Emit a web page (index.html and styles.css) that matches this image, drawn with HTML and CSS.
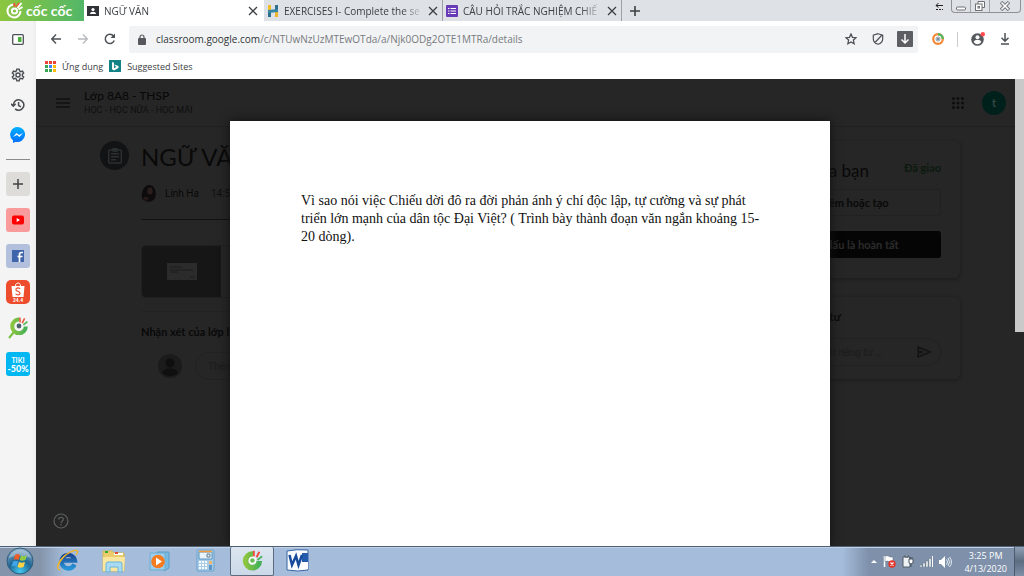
FILE: index.html
```html
<!DOCTYPE html>
<html lang="vi">
<head>
<meta charset="utf-8">
<title>NGỮ VĂN</title>
<link rel="stylesheet" href="styles.css">
</head>
<body>
<svg class="defs" aria-hidden="true">
  <defs>
    <linearGradient id="leaf" x1="0" x2="1"><stop offset="0" stop-color="#8cc540"/><stop offset="1" stop-color="#45b155"/></linearGradient>
    <linearGradient id="msg" x1="0" y1="0" x2="0" y2="1"><stop offset="0" stop-color="#00b2ff"/><stop offset="1" stop-color="#006aff"/></linearGradient>
    <radialGradient id="orb" cx=".5" cy=".9" r=".9"><stop offset="0" stop-color="#41c8ee"/><stop offset=".5" stop-color="#1f6795"/><stop offset="1" stop-color="#93b4cb"/></radialGradient>
    <linearGradient id="ie" x1="0" y1="0" x2="0" y2="1"><stop offset="0" stop-color="#1d4a94"/><stop offset="1" stop-color="#2593d6"/></linearGradient>
  </defs>
  <symbol id="close" viewBox="0 0 10 10"><path d="M1 1l8 8M9 1L1 9" stroke="#3c4043" stroke-width="1.3" fill="none"/></symbol>
  <symbol id="coccoc" viewBox="0 0 24 24">
    <path d="M13 4.500A8.500 8.500 0 1 0 21 13" fill="none" stroke="url(#leaf)" stroke-width="5"/>
    <path d="M14 8l-.5-6M16.500 9l3-6" stroke="#ef5a3c" stroke-width="2"/><path d="M18 11l5-4" stroke="#4db757" stroke-width="2"/>
    <circle cx="12.500" cy="12.500" r="3" fill="#4d6268"/>
  </symbol>
</svg>

<header class="tabbar">
  <div class="brand">
    <svg width="20" height="19" viewBox="0 0 20 19" fill="none" stroke="#fff" stroke-width="2"><path d="M8 3.500A6.500 6.500 0 1 0 15.500 10"/><circle cx="9.500" cy="10" r="2.600"/><path d="M10 6l-1-4M12 6l2-4" stroke="#f15a3b"/><path d="M13.500 8.500l4-2.500M12.500 7l4-5"/></svg>
    <span>cốc cốc</span>
  </div>
  <nav class="tabs" aria-label="Tabs">
    <div class="tab active">
      <svg width="12" height="12" viewBox="0 0 12 12"><rect y="1" width="12" height="10" fill="#303438"/><circle cx="6" cy="4.500" r="1.600" fill="#fff"/><path d="M3 9c0-3 6-3 6 0z" fill="#fff"/></svg>
      <a href="#">NGỮ VĂN</a>
      <button class="plain" aria-label="Close tab"><svg width="10" height="10"><use href="#close"/></svg></button>
    </div>
    <div class="tab">
      <svg width="12" height="12" viewBox="0 0 12 12"><path d="M1 0h3v5H1z" fill="#f2bd27"/><path d="M1 7h3v5H1z" fill="#2f6f8e"/><path d="M8 0h3v5H8z" fill="#2f6f8e"/><path d="M8 7h3v5H8z" fill="#edb62c"/><path d="M1 5l10-1v3L1 8z" fill="#3687a3"/></svg>
      <a href="#">EXERCISES I- Complete the se</a>
      <button class="plain" aria-label="Close tab"><svg width="10" height="10"><use href="#close"/></svg></button>
    </div>
    <div class="tab">
      <svg width="12" height="12" viewBox="0 0 12 12"><rect width="12" height="12" rx="1" fill="#673ab7"/><path d="M4.500 3.500H10M4.500 6H10M4.500 8.500H10M2 3.500h1.500M2 6h1.500M2 8.500h1.500" stroke="#fff"/></svg>
      <a href="#">CÂU HỎI TRẮC NGHIỆM CHIẾ</a>
      <button class="plain" aria-label="Close tab"><svg width="10" height="10"><use href="#close"/></svg></button>
    </div>
    <button class="plain newtab" aria-label="New tab"><svg width="10" height="10" viewBox="0 0 10 10"><path d="M5 0v10M0 5h10" stroke="#3c4043" stroke-width="1.600"/></svg></button>
  </nav>
  <svg class="tabsearch" width="9" height="8" viewBox="0 0 9 8"><path d="M1 2.500h7M3.500 0L1 2.500 3.500 4.500" fill="none" stroke="#222"/><path d="M1 6.500h7" stroke="#222" stroke-dasharray="2 1"/></svg>
  <div class="winctl">
    <button aria-label="Minimize"><svg width="10" height="10" viewBox="0 0 10 10"><rect x=".5" y="6" width="9" height="3" rx="1" fill="#fff" stroke="#6c7075"/></svg></button>
    <button aria-label="Restore"><svg width="10" height="10" viewBox="0 0 10 10"><path d="M3 3V.5h6.500v6H7" fill="#fff" stroke="#6c7075"/><rect x=".5" y="3" width="6.500" height="6.500" fill="#fff" stroke="#6c7075"/><rect x="3" y="5.500" width="1.500" height="1.500" fill="none" stroke="#6c7075"/></svg></button>
    <button class="wide" aria-label="Close"><svg width="10" height="10" viewBox="0 0 10 10"><path d="M1 1l8 8M9 1L1 9" stroke="#74787d" stroke-width="3.500"/><path d="M1.500 1.500l7 7M8.500 1.500l-7 7" stroke="#fff" stroke-width="1.500"/></svg></button>
  </div>
</header>

<div class="work">
  <aside class="sidebar">
    <button class="plain first" aria-label="Panel"><svg width="12" height="11" viewBox="0 0 12 11"><rect x=".7" y=".7" width="10.600" height="9.600" rx="1" fill="#fff" stroke="#4d5156" stroke-width="1.300"/><path d="M6 3h3.500v5H6z" fill="#4caf38"/></svg></button>
    <button class="plain" aria-label="Settings"><svg width="14" height="14" viewBox="0 0 24 24" fill="none" stroke="#4a4d51" stroke-width="2.400"><circle cx="12" cy="12" r="3.500"/><path d="M10 2h4l.7 3 2 1.200 3-1 2 3.600-2.300 2v2.400l2.300 2-2 3.600-3-1-2 1.200-.7 3h-4l-.7-3-2-1.200-3 1-2-3.600 2.300-2v-2.400l-2.300-2 2-3.600 3 1 2-1.200z"/></svg></button>
    <button class="plain" aria-label="History"><svg width="14" height="14" viewBox="0 0 24 24" fill="none" stroke="#4a4d51" stroke-width="2.600"><path d="M4 12a9 9 0 1 1 3 6.700M0 10l4 4 4-4M13 7v6l4 2"/></svg></button>
    <button class="plain" aria-label="Messenger"><svg width="16" height="16" viewBox="0 0 16 16"><path d="M8 0a7.700 7.500 0 1 1-2.300 14.800L3 16v-2.700A7.700 7.500 0 0 1 8 0z" fill="url(#msg)"/><path d="M3 10l3.500-4 2.500 2 4-2-3.500 4L7 8z" fill="#fff"/></svg></button>
    <hr>
    <button class="tile grey" aria-label="Add"><svg width="10" height="10" viewBox="0 0 10 10"><path d="M5 0v10M0 5h10" stroke="#404040" stroke-width="1.500"/></svg></button>
    <button class="tile pink" aria-label="YouTube"><svg width="12" height="10" viewBox="0 0 12 10"><rect y=".5" width="12" height="9" rx="2" fill="#f00"/><path d="M4.700 3v4L8 5z" fill="#fff"/></svg></button>
    <button class="tile blue" aria-label="Facebook"><svg width="12" height="12" viewBox="0 0 12 12"><rect width="12" height="12" fill="#4064ac"/><path d="M7.500 12V4.500q0-2 2-2H11M5.500 6.500h5" stroke="#fff" stroke-width="1.700" fill="none"/></svg></button>
    <button class="tile shopee" aria-label="Shopee"><svg width="14" height="15" viewBox="0 0 14 15"><path d="M.5 4h13l-1 11h-11z" fill="#fff"/><path d="M4.500 4c0-4 5-4 5 0" fill="none" stroke="#fff"/><path d="M9.200 6.700C7 5.300 4.500 6 5 8c.5 1.500 4 1.200 4 3.200 0 2-3 2-4.500.7" fill="none" stroke="#f05030" stroke-width="1.200"/></svg><span>24.4</span></button>
    <button class="tile" aria-label="Cốc Cốc"><svg width="24" height="24" viewBox="0 0 24 24"><path d="M3 22l5-6" stroke="#76bf43" stroke-width="2"/><g transform="translate(3 0) scale(.8)"><use href="#coccoc" width="24" height="24"/></g></svg></button>
    <button class="tile tiki"><span>TIKI</span><b>-50%</b></button>
  </aside>

  <main class="main">
    <div class="toolbar">
      <button class="plain" aria-label="Back"><svg width="10" height="10" viewBox="0 0 10 10" fill="none" stroke="#4d5156" stroke-width="1.400"><path d="M10 5H1M5 .5L.8 5 5 9.500"/></svg></button>
      <button class="plain" aria-label="Forward"><svg width="10" height="10" viewBox="0 0 10 10" fill="none" stroke="#b9bbbe" stroke-width="1.400"><path d="M0 5h9M5 .5L9.200 5 5 9.500"/></svg></button>
      <button class="plain" aria-label="Reload"><svg width="12" height="12" viewBox="0 0 12 12"><path d="M10.200 7.500A4.600 4.600 0 1 1 9.500 3" fill="none" stroke="#4d5156" stroke-width="1.500"/><path d="M11 .5v4.500H6.500z" fill="#4d5156"/></svg></button>
      <div class="address">
        <svg width="8" height="11" viewBox="0 0 8 11"><rect y="4" width="8" height="7" rx="1" fill="#55585c"/><path d="M2 4V3a2 2 0 0 1 4 0v1" fill="none" stroke="#55585c" stroke-width="1.200"/></svg>
        <span class="url" role="textbox" aria-label="Address"><span class="host">classroom.google.com</span>/c/NTUwNzUzMTEwOTda/a/Njk0ODg2OTE1MTRa/details</span>
        <svg width="12" height="12" viewBox="0 0 12 12"><path d="M6 1l1.500 3.300 3.500.4-2.600 2.400.7 3.600L6 8.900l-3.100 1.800.7-3.600L1 4.700l3.500-.4z" fill="none" stroke="#4d5156" stroke-width="1.300"/></svg>
        <svg class="shield" width="12" height="12" viewBox="0 0 12 12" fill="none" stroke="#4d5156" stroke-width="1.200"><path d="M6 .7l4.700 1.500v3.500c0 3-2 4.700-4.700 5.600-2.700-.9-4.700-2.600-4.700-5.600V2.200zM10 2L3 9.500"/></svg>
        <svg width="16" height="16" viewBox="0 0 16 16"><rect width="16" height="16" rx="1" fill="#5b5e62"/><path d="M8 3v9M4.500 8.500L8 12l3.500-3.500" fill="none" stroke="#fff" stroke-width="1.500"/></svg>
      </div>
      <div class="actions">
        <svg width="12" height="12" viewBox="0 0 12 12" fill="none"><circle cx="6" cy="6" r="4.800" stroke="#f58634" stroke-width="2.200"/><path d="M6 1.200A4.800 4.800 0 0 1 10.800 6" stroke="#57b85c" stroke-width="2.400"/><circle cx="6" cy="6" r="2" stroke="#8895a0"/><circle cx="6" cy="6" r="1" fill="#4a6988"/></svg>
        <i class="divider"></i>
        <svg width="14" height="14" viewBox="0 0 14 14"><circle cx="6.500" cy="7.500" r="6.300" fill="#55585c"/><circle cx="6.500" cy="5.300" r="2" fill="#fff"/><path d="M2.700 10c1-3 6.600-3 7.600 0-2 3-5.600 3-7.600 0z" fill="#fff"/><circle cx="11.800" cy="2.200" r="2.200" fill="#ff4b4b"/></svg>
        <svg class="downloads" width="10" height="12" viewBox="0 0 10 12"><path d="M5 0v8M1.500 4.800L5 8.200l3.500-3.400M1 11h8" fill="none" stroke="#4d5156" stroke-width="1.500"/></svg>
      </div>
    </div>
    <nav class="bookmarks" aria-label="Bookmarks">
      <a href="#"><svg width="11" height="11" viewBox="0 0 11 11"><path d="M0 0h3v3H0zM4 0h3v3H4zM8 0h3v3H8z" fill="#e94335"/><path d="M0 4h3v3H0z" fill="#34a853"/><path d="M4 4h3v3H4z" fill="#4285f4"/><path d="M8 4h3v3H8z" fill="#fbbc05"/><path d="M0 8h3v3H0zM4 8h3v3H4z" fill="#34a853"/><path d="M8 8h3v3H8z" fill="#fbbc05"/></svg>Ứng dụng</a>
      <a href="#"><svg width="12" height="12" viewBox="0 0 12 12"><rect width="12" height="12" fill="#128284"/><path d="M3 2l2 .7v5.500l2.500-1.500L6 6l-.7-1.600L9.500 6v2L5 10.500 3 9.300z" fill="#fff"/></svg>Suggested Sites</a>
    </nav>

    <section class="page">
      <header class="classbar">
        <svg width="14" height="10" viewBox="0 0 14 10"><path d="M0 1h14M0 5h14M0 9h14" stroke="#101011" stroke-width="1.300"/></svg>
        <div class="classname"><strong>Lớp 8A8 - THSP</strong><small>HỌC - HỌC NỮA - HỌC MÃI</small></div>
        <svg width="12" height="12" viewBox="0 0 12 12" fill="#0e0e0f"><circle cx="1.500" cy="1.500" r="1.500"/><circle cx="6" cy="1.500" r="1.500"/><circle cx="10.500" cy="1.500" r="1.500"/><circle cx="1.500" cy="6" r="1.500"/><circle cx="6" cy="6" r="1.500"/><circle cx="10.500" cy="6" r="1.500"/><circle cx="1.500" cy="10.500" r="1.500"/><circle cx="6" cy="10.500" r="1.500"/><circle cx="10.500" cy="10.500" r="1.500"/></svg>
        <span class="avatar">t</span>
      </header>
      <div class="content">
        <span class="badge"><svg width="14" height="16" viewBox="0 0 14 16"><rect x=".7" y="2" width="12.600" height="13" rx="1" fill="none" stroke="#2d3031" stroke-width="1.400"/><path d="M5 0h4v3H5zM3 5.700h8M3 8.700h8M3 11.700h5" fill="#2d3031" stroke="#2d3031" stroke-width="1.400"/></svg></span>
        <article class="task">
          <h1>NGỮ VĂN</h1>
          <p class="author"><svg width="16" height="18" viewBox="0 0 16 18"><path d="M1 14C0 7 4 0 9 1c5 1 7 8 5 13-3 5-10 5-13 0z" fill="#0d0b0b"/><ellipse cx="9" cy="7" rx="2.700" ry="3.500" fill="#2b1e1c"/><path d="M2 14c2-2 4-1 6 0l-2 3c-2 0-3-1-4-3z" fill="#26181a"/></svg><span>Linh Ha</span><span>14:56</span></p>
          <div class="attach"><span class="thumb"><svg width="30" height="17" viewBox="0 0 30 17"><rect width="30" height="17" fill="#2b2b2b"/><path d="M3 4h12M3 7h23M3 9h8M23 14h5" stroke="#1c1c1c"/></svg></span></div>
          <h2>Nhận xét của lớp học</h2>
          <div class="comment"><svg width="24" height="24" viewBox="0 0 24 24"><circle cx="12" cy="12" r="12" fill="#1b1b1b"/><circle cx="12" cy="9" r="4.500" fill="#0f0f0f"/><path d="M4 19c1-6 15-6 16 0-4 4-12 4-16 0z" fill="#0f0f0f"/></svg><input aria-label="Nhận xét của lớp học" placeholder="Thêm nhận xét"></div>
        </article>
        <aside class="cards">
          <section class="card work-card">
            <header><h3>Bài tập của bạn</h3><span>Đã giao</span></header>
            <button class="add">+ Thêm hoặc tạo</button>
            <button class="done">Đánh dấu là hoàn tất</button>
          </section>
          <section class="card private">
            <h4>Nhận xét riêng tư</h4>
            <div class="pill"><input aria-label="Nhận xét riêng tư" placeholder="Thêm nhận xét riêng tư ..."><button class="plain" aria-label="Gửi"><svg width="14" height="12" viewBox="0 0 14 12"><path d="M1 1l12 5-12 5V7l5-1-5-1z" fill="none" stroke="#111413" stroke-width="1.500"/></svg></button></div>
          </section>
        </aside>
      </div>
      <button class="plain help" aria-label="Help"><svg width="16" height="16" viewBox="0 0 16 16" fill="none" stroke="#5d5f61" stroke-width="1.200"><circle cx="8" cy="8" r="7"/><path d="M5.700 6.500c0-3 4.600-3 4.600 0C10.300 8 8 8 8 10M8 11v1.500"/></svg></button>
      <article class="document">
        <p>Vì sao nói việc Chiếu dời đô ra đời phản ánh ý chí độc lập, tự cường và sự phát triển lớn mạnh của dân tộc Đại Việt? ( Trình bày thành đoạn văn ngắn khoảng 15-20 dòng).</p>
      </article>
      <i class="scroll"></i>
    </section>
  </main>
</div>

<footer class="taskbar">
  <button class="start" aria-label="Start"><svg width="28" height="28" viewBox="0 0 28 28"><circle cx="14" cy="14" r="13" fill="url(#orb)" stroke="#305c7d"/><path d="M3 11C6 0 22 0 25 11c-7-3-15-3-22 0z" fill="#fff" opacity=".3"/><path d="M9 8q3-2 5 0l-1.500 5q-3-1.500-5 0z" fill="#ef5d27"/><path d="M15 8.500q3 1.500 6 0L19.500 13q-3 1.500-6 0z" fill="#8fcb43"/><path d="M7 14.500q3-1.500 5 0l-1.500 5q-3-1.500-5 0z" fill="#41a5e9"/><path d="M13 15q3 1.500 6 0l-1.500 5q-3 1.500-6 0z" fill="#fcd144"/></svg></button>
  <nav class="apps" aria-label="Taskbar">
    <button aria-label="Internet Explorer"><svg width="26" height="24" viewBox="0 0 26 24"><path d="M19.500 15.500A6.800 6.800 0 1 1 20 11.500H8" fill="none" stroke="url(#ie)" stroke-width="4.300"/><path d="M5 21C-1 21 7 8 14 4s10-3 7 2c6-8-5-5-12 1S1 21 5 21z" fill="#f6bd24" stroke="#f1b32a" stroke-width="1"/></svg></button>
    <button aria-label="Explorer"><svg width="26" height="24" viewBox="0 0 26 24"><path d="M2 2h9l2 2h10v18H2z" fill="#edcd6b" stroke="#d8b653"/><path d="M4 3h3" stroke="#2faa3a" stroke-width="2"/><path d="M13 5h9" stroke="#fff" stroke-width="2"/><path d="M14 4h3" stroke="#df4d32" stroke-width="2"/><path d="M2 8h22l-1 14H2z" fill="#f9e7a1"/><path d="M5 23v-8q0-2 2-2h12q2 0 2 2v8h-4v-5H9v5z" fill="#a9daf3" stroke="#66b5dc"/></svg></button>
    <button aria-label="Media Player"><svg width="26" height="24" viewBox="0 0 26 24"><path d="M10 3h12v16l-5 3z" fill="#77b9df" stroke="#5a9cc5"/><path d="M3 4h15v17H3z" fill="#9bcdec" stroke="#6eadd3"/><circle cx="11" cy="12.500" r="6.800" fill="#f47b20"/><path d="M9 8.500v8l6-4z" fill="#fff"/></svg></button>
    <button aria-label="Calculator"><svg width="20" height="24" viewBox="0 0 20 24"><rect x="1" y="1" width="17" height="21" rx="1" fill="#a8cbe6" stroke="#6aa2cc"/><path d="M3 3h13v7H3z" fill="#e8f3fa" stroke="#5592bf"/><path d="M3 2.500h13" stroke="#f29b3a" stroke-width="1.500"/><path d="M11 5h3v3h-3z" fill="none" stroke="#607b91"/><path d="M3 13h9M3 16h9M3 19h9" stroke="#f8fcff" stroke-width="2" stroke-dasharray="2 1"/><path d="M13 12h3v3h-3z" fill="#f3b46e"/><path d="M13 16h3v5h-3z" fill="#5d94c5"/></svg></button>
    <button class="current" aria-label="Cốc Cốc"><svg width="22" height="22" viewBox="0 0 24 24"><path d="M13 5.500A7.500 7.500 0 1 0 20 13" fill="none" stroke="url(#leaf)" stroke-width="6"/><circle cx="12.500" cy="12.500" r="4" fill="#fff"/><circle cx="12.500" cy="12.500" r="2.500" fill="#67bd58"/><path d="M14 8V2M17 9l3-6" stroke="#ef4938" stroke-width="2"/><path d="M18 12l5-4" stroke="#4ab464" stroke-width="2"/></svg></button>
    <button aria-label="Word"><svg width="24" height="24" viewBox="0 0 24 24"><path d="M1 2q10-2 21-1v20q-10 2-21 0z" fill="#f9fbff" stroke="#3564a3"/><path d="M16 4h6v9h-6z" fill="#245cad"/><path d="M3.500 6l2.500 10 4-9 2.500 9L16 6" fill="none" stroke="#184b9b" stroke-width="2.500"/><path d="M14 17l2-4h6v7h-6z" fill="#fff"/></svg></button>
  </nav>
  <div class="tray">
    <svg width="6" height="4" viewBox="0 0 6 4"><path d="M3 0l3 3H0z" fill="#fff"/></svg>
    <svg width="13" height="13" viewBox="0 0 13 13"><path d="M1.500 1v11" stroke="#fff" stroke-width="1.500"/><path d="M2 1q3-1 5 1h3v5H7Q4 5 2 7z" fill="#fff" stroke="#5c6b7c" stroke-width=".5"/><circle cx="9" cy="9" r="3.700" fill="#e4362b"/><path d="M7.500 7.500l3 3m0-3l-3 3" stroke="#fff" stroke-width="1.200"/></svg>
    <svg width="12" height="13" viewBox="0 0 12 13"><path d="M1 2h7v10H1zM3 0h3v2H3z" fill="#eef2f5" stroke="#4e5a67"/><path d="M7 4h4v4l-2 1-2-1zM8 2v2m2-2v2M9 9v3" fill="#fff" stroke="#46525f"/></svg>
    <svg width="13" height="11" viewBox="0 0 13 11"><path d="M0 9h2v2H0zM3 7h2v4H3zM6 5h2v6H6zM9 2.500h2V11H9z" fill="#fff" stroke="#62707f" stroke-width=".5"/><path d="M12.500 0v11" stroke="#fff"/></svg>
    <svg width="13" height="12" viewBox="0 0 13 12"><path d="M0 4h2l4-4v12L2 8H0z" fill="#fff"/><path d="M7.500 3.500q2 2.500 0 5M9 2q3 4 0 8M10.500 1q4 5 0 10" fill="none" stroke="#e6edf4"/></svg>
    <time>3:25 PM<br>4/13/2020</time>
    <button class="showdesk" aria-label="Show desktop"></button>
  </div>
</footer>
</body>
</html>
```
FILE: styles.css
```css
* { box-sizing: border-box; }
body {
  margin: 0;
  height: 100vh;
  display: flex;
  flex-direction: column;
  overflow: hidden;
  background: #fff;
  font-family: "Open Sans", "Noto Sans", sans-serif;
  font-size: 10px;
  color: #3c4043;
}
svg { display: block; flex: none; }
h1, h2, h3, h4, p { margin: 0; }
a { color: inherit; text-decoration: none; }
button, input { font: inherit; color: inherit; padding: 0; margin: 0; border: 0; background: none; }
button { display: flex; align-items: center; justify-content: center; }
.defs { position: absolute; width: 0; height: 0; }

.tabbar { display: flex; flex: none; height: 21px; background: #dee1e6; }
.brand {
  display: flex; align-items: center; gap: 1px; width: 84px; padding-left: 5px;
  background: linear-gradient(90deg, #8dc63f, #52b768);
  color: #fff; font: bold 14px/20px Lato, sans-serif;
}
.tabs { display: flex; flex: 1; min-width: 0; }
.tab { display: flex; align-items: center; flex: 0 1 179px; min-width: 0; gap: 5px; padding: 0 4px 0 3px; border-right: 1px solid #9da1a6; }
.tab a {
  flex: 1; min-width: 0; overflow: hidden; white-space: nowrap; line-height: 20px;
  mask-image: linear-gradient(90deg, #000 85%, transparent);
}
.tab.active { flex-basis: 180px; padding-right: 5px; background: #fff; border-color: #fff; }
.newtab { width: 26px; }
.tabsearch { margin: 3px 7px 0 0; }
.winctl { display: flex; height: 13px; margin-right: 3px; border: 1px solid #8e9297; border-top: 0; border-radius: 0 0 4px 4px; }
.winctl button { width: 19px; border-right: 1px solid #a2a6ab; }
.winctl .wide { width: 30px; border: 0; }

.work { display: flex; flex: 1; min-height: 0; }
.sidebar {
  display: flex; flex-direction: column; align-items: center; flex: none;
  width: 36px; gap: 12px; padding-top: 9px;
  background: linear-gradient(90deg, #f4f4f4 90%, #ececec);
}
.sidebar .plain { height: 18px; }
.sidebar .first { margin-bottom: 6px; }
.sidebar hr { width: 24px; margin: 3px 0 0; border: 0; border-top: 1px solid #8b8b8b; }
.tile { flex: none; flex-direction: column; width: 24px; height: 24px; border-radius: 3px; }
.grey { background: #dddcd8; }
.pink { background: #f99b9b; }
.blue { background: #b2c0de; }
.shopee { background: #ee4d2d; border-radius: 5px; color: #fff; font: bold 5px/6px Roboto, sans-serif; }
.tiki { background: #00b7f1; color: #fff; font: bold 9px/9px Lato, sans-serif; }
.tiki span { font-size: 7px; line-height: 8px; }

.main { display: flex; flex-direction: column; flex: 1; min-width: 0; }
.toolbar { display: flex; align-items: center; flex: none; height: 36px; padding: 0 14px 0 8px; }
.toolbar > .plain { width: 24px; height: 24px; margin-right: 3px; }
.address { display: flex; align-items: center; flex: 1; min-width: 0; height: 27px; gap: 15px; margin-left: 4px; padding: 0 5px 0 9px; border-radius: 2px; background: #f1f3f4; }
.url { flex: 1; min-width: 0; margin-left: -5px; overflow: hidden; white-space: nowrap; color: #777a7e; }
.host { color: #303338; }
.shield { margin-right: -2px; }
.actions { display: flex; align-items: center; gap: 13px; padding-left: 14px; }
.downloads { margin-left: 2px; }
.divider { width: 1px; height: 15px; background: #ccc; }
.bookmarks { display: flex; align-items: center; flex: none; gap: 6px; height: 22px; padding: 0 9px 4px; font-size: 9px; }
.bookmarks a { display: flex; align-items: center; gap: 6px; }

.page { position: relative; flex: 1; min-height: 0; overflow: hidden; background: #262626; color: #090909; font-family: Lato, sans-serif; }
.classbar { display: flex; align-items: center; height: 48px; padding: 0 18px 0 20px; border-bottom: 1px solid #202020; }
.classname { display: flex; flex-direction: column; flex: 1; margin-left: 14px; }
.classname strong { font: 500 12px/15px Lato, sans-serif; }
.classname small { font: 9px/14px Roboto, sans-serif; color: #0f0f0f; }
.avatar { width: 24px; margin-left: 18px; border-radius: 50%; background: #00201c; color: #34443f; font: bold 12px/24px Lato, sans-serif; text-align: center; }
.content { display: flex; align-items: flex-start; padding: 14px 64px 0; }
.badge { display: flex; align-items: center; justify-content: center; flex: none; width: 29px; height: 29px; margin-right: 12px; border-radius: 50%; background: #111314; }
.task { flex: 1; min-width: 0; margin-right: 24px; }
.task h1 { font: 24px/32px Lato, sans-serif; }
.author { display: flex; align-items: center; gap: 8px; height: 47px; padding-bottom: 6px; border-bottom: 1px solid #111; font-family: Roboto, sans-serif; }
.author span + span { margin-left: 4px; color: #0f0f0f; }
.attach { height: 53px; margin-top: 25px; border: 1px solid #202020; border-radius: 5px; overflow: hidden; }
.thumb { display: flex; align-items: center; justify-content: center; width: 79px; height: 100%; background: #161616; }
.task h2 { margin-top: 13px; padding-top: 12px; border-top: 1px solid #222; font: bold 11px/16px Lato, sans-serif; }
.comment { display: flex; align-items: center; gap: 13px; margin-top: 12px; padding-left: 17px; }
.comment input { flex: 1; min-width: 0; height: 28px; padding: 0 12px; border: 1px solid #222; border-radius: 14px; }
input::placeholder { color: #1b1b1b; opacity: 1; font-family: Roboto, sans-serif; }
.cards { display: flex; flex-direction: column; flex: none; width: 224px; gap: 19px; }
.card { padding: 20px 19px; border-radius: 6px; box-shadow: 0 1px 3px 1px #1f1f1f; }
.work-card header { display: flex; align-items: center; justify-content: space-between; margin-bottom: 8px; }
.card h3 { font: 17px/20px Lato, sans-serif; }
.work-card header span { margin-top: -6px; color: #0b1a0d; font: bold 11px/14px Lato, sans-serif; }
.add, .done { width: 100%; height: 27px; border-radius: 3px; font: bold 11px/16px Lato, sans-serif; }
.add { border: 1px solid #212121; }
.done { margin-top: 15px; background: #050505; color: #2c2c2c; }
.private { padding: 12px 19px 13px; }
.card h4 { font: bold 11px/16px Lato, sans-serif; margin-bottom: 13px; }
.pill { display: flex; align-items: center; height: 28px; padding: 0 9px 0 14px; border: 1px solid #212121; border-radius: 14px; }
.pill input { flex: 1; min-width: 0; }
.help { position: absolute; left: 17px; bottom: 17px; }
.document { position: absolute; top: 42px; bottom: 0; left: 50%; width: 600px; transform: translateX(-50%); padding: 71px 60px 0 71px; background: #fff; box-shadow: 0 0 10px #111; color: #111; font: 14px/18px "Liberation Serif", serif; }
.scroll { position: absolute; top: 0; right: 0; width: 9px; height: 253px; background: #c9c9c9; }

.taskbar { display: flex; flex: none; height: 30px; border-top: 1px solid #4f6075; background: linear-gradient(90deg, #8494aa 0, #8494aa 40px, #a5bddb 66px, #a5bddb calc(100% - 182px), #7e90aa calc(100% - 155px)); box-shadow: inset 0 1px #c2d2e6; }
.taskbar button { padding-bottom: 2px; }
.start { width: 40px; margin-right: 5px; }
.apps { display: flex; flex: 1; }
.apps button { width: 46px; }
.apps .current { margin: 0 1px; width: 44px; border: 1px solid #5c6b80; border-top: 0; border-radius: 2px; background: linear-gradient(#dce6f1, #cbd8e8); }
.tray { display: flex; align-items: center; gap: 6px; }
.tray time { margin: 0 1px 0 6px; color: #fff; font-size: 9px; line-height: 13px; text-align: center; }
.showdesk { width: 10px; height: 29px; border-left: 1px solid #4c5a6d; background: linear-gradient(#8fa0b4, #5c6c81 50%, #7f91a8); }
```
